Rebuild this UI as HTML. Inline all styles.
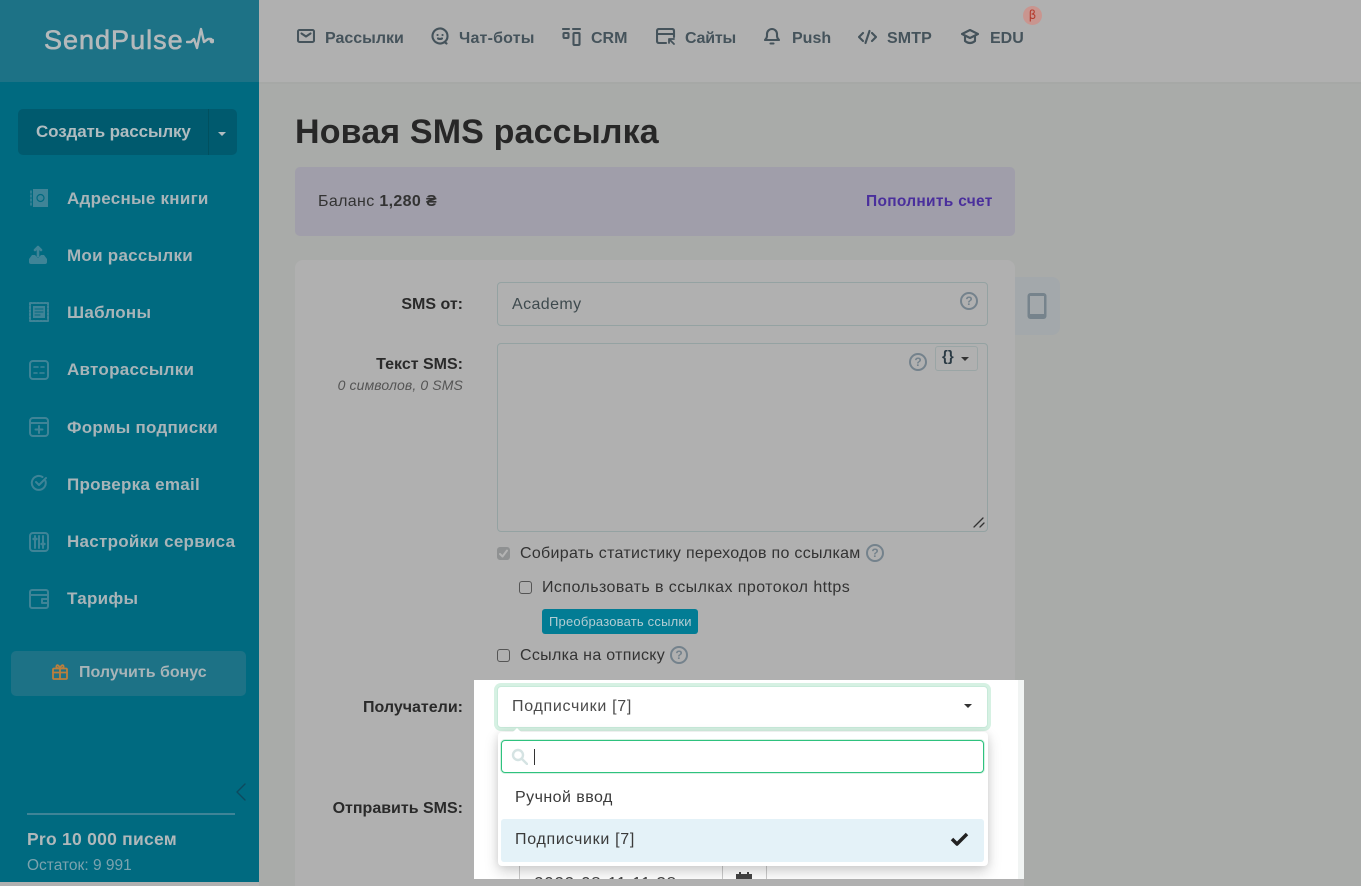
<!DOCTYPE html>
<html lang="ru"><head><meta charset="utf-8"><title>Новая SMS рассылка</title>
<style>
html,body{margin:0;padding:0;width:1361px;height:886px;overflow:hidden;background:#a9aba9}
body{position:relative;font-family:"Liberation Sans","DejaVu Sans",sans-serif;color:#2c2c2c}
.a{position:absolute;white-space:nowrap}
.b{font-weight:700}
.nav{font-size:16px;font-weight:700;color:#45535b;line-height:20px;top:29px}
.side{font-size:17px;font-weight:700;color:#a8b4b8;line-height:22px;left:67px;letter-spacing:.27px}
.ic{position:absolute;fill:none;stroke-linecap:round;stroke-linejoin:round}
.si{stroke:#3f8497;stroke-width:2}
.ni{stroke:#45535b;stroke-width:2.1}
.q{position:absolute;width:14px;height:14px;border:2px solid #74828c;border-radius:50%;color:#74828c;font-size:12px;font-weight:700;line-height:14px;text-align:center}
.t{font-size:16px;color:#333;line-height:20px;letter-spacing:.35px}
.cb{position:absolute;width:11px;height:11px;border:1.5px solid #555;border-radius:3px}
</style></head><body>

<div class="a" style="left:0;top:0;width:1361px;height:82px;background:#b0b0b0"></div>
<div class="a" style="left:0;top:82px;width:1361px;height:2px;background:#a6a8a6"></div>

<div class="a" style="left:0;top:0;width:259px;height:82px;background:#1d7286"></div>
<div class="a" style="left:0;top:82px;width:259px;height:800px;background:#006a80"></div>
<div class="a" style="left:0;top:882px;width:259px;height:4px;background:#b0b0b0"></div>

<div class="a" style="left:44px;top:24px;font-size:27px;letter-spacing:1px;-webkit-text-stroke:.6px #b4b9bb;color:#b4b9bb;line-height:32px">SendPulse</div>
<svg class="ic" style="left:186px;top:26px;stroke:#b4b9bb;stroke-width:2.4" width="28" height="26" viewBox="0 0 28 26"><path d="M1 16h4l3-3 3 9 4-19 3 13 4-3h3"/><circle cx="26" cy="15" r="1.2" fill="#b4b9bb"/></svg>

<div class="a" style="left:18px;top:109px;width:219px;height:46px;background:#005a6e;border-radius:5px"></div>
<div class="a" style="left:208px;top:109px;width:1px;height:46px;background:#00505f"></div>
<div class="a b" style="left:36px;top:121px;font-size:17px;letter-spacing:-.12px;color:#b0bcc0;line-height:22px">Создать рассылку</div>
<div class="a" style="left:218px;top:132px;border:4.5px solid transparent;border-top-color:#b0bcc0;border-bottom:0"></div>

<svg class="ic si" style="left:29px;top:188px" width="20" height="20" viewBox="0 0 20 20"><rect x="4" y="1" width="15" height="18" fill="#3f8497" stroke="none"/><path d="M2 3v14" stroke-width="1.500" stroke-dasharray="2 2"/><circle cx="11.500" cy="10" r="3.500" stroke="#006a80" stroke-width="1.200"/></svg>
<div class="a side" style="top:188px">Адресные книги</div>
<svg class="ic si" style="left:28px;top:245px" width="20" height="20" viewBox="0 0 20 20"><path d="M1 14l3-4h3l3 3 3-3h3l3 4v3q0 2-2 2H3q-2 0-2-2z" fill="#3f8497" stroke="none"/><path d="M10 11V2M7 5l3-3 3 3" stroke-width="2.6"/></svg>
<div class="a side" style="top:245px">Мои рассылки</div>
<svg class="ic si" style="left:29px;top:302px" width="20" height="20" viewBox="0 0 20 20"><rect x="1" y="1" width="18" height="18" stroke-dasharray="2 1.5"/><rect x="4" y="4" width="12" height="12" fill="#3f8497" stroke="none"/><path d="M6 7h8M6 10h8M6 13h5" stroke="#006a80" stroke-width="1"/></svg>
<div class="a side" style="top:302px">Шаблоны</div>
<svg class="ic si" style="left:29px;top:360px" width="20" height="20" viewBox="0 0 20 20"><rect x="1" y="1" width="18" height="18" rx="3"/><path d="M5 7h4M12 7h3M5 13h3M11 13h4" stroke-width="1.6"/></svg>
<div class="a side" style="top:359px">Авторассылки</div>
<svg class="ic si" style="left:29px;top:417px" width="20" height="20" viewBox="0 0 20 20"><rect x="1" y="1" width="18" height="18" rx="3"/><path d="M1 6h18M10 9v7M6.5 12.500h7" /></svg>
<div class="a side" style="top:417px">Формы подписки</div>
<svg class="ic si" style="left:30px;top:474px" width="18" height="18" viewBox="0 0 18 18"><path d="M15.500 7a7 7 0 1 1-3-4"/><path d="M6 8l3 3 7-7"/></svg>
<div class="a side" style="top:474px">Проверка email</div>
<svg class="ic si" style="left:29px;top:532px" width="20" height="20" viewBox="0 0 20 20"><rect x="1" y="1" width="18" height="18" rx="3"/><path d="M6 4v12M10 4v12M14 4v12"/><path d="M4.500 7h3M12.500 12h3" stroke-width="2.400"/></svg>
<div class="a side" style="top:531px">Настройки сервиса</div>
<svg class="ic si" style="left:29px;top:589px" width="20" height="20" viewBox="0 0 20 20"><rect x="1" y="1" width="18" height="18" rx="2"/><path d="M1 6h18M19 10h-6v4h6"/></svg>
<div class="a side" style="top:588px">Тарифы</div>

<div class="a" style="left:11px;top:651px;width:235px;height:45px;background:#1d7286;border-radius:5px"></div>
<svg class="ic" style="left:52px;top:664px;stroke:#bb7f3c;stroke-width:1.800" width="16" height="16" viewBox="0 0 16 16"><rect x="1" y="4.500" width="14" height="10.500" rx="1"/><path d="M1 8.500h14M8 4.500V15M8 4.500C5 4.500 4 3.500 4.500 2S7 1 8 4.500C9 1 11 .5 11.500 2S11 4.500 8 4.500"/></svg>
<div class="a b" style="left:79px;top:663px;font-size:16px;color:#a8b4b8;line-height:20px">Получить бонус</div>

<svg class="ic" style="left:235px;top:783px;stroke:#0d4a5e;stroke-width:1.400" width="12" height="18" viewBox="0 0 12 18"><path d="M10 1L2 9l8 8"/></svg>
<div class="a" style="left:27px;top:813px;width:208px;height:2px;background:#3f8497"></div>
<div class="a b" style="left:27px;top:829px;font-size:17.500px;letter-spacing:.25px;color:#b0b8ba;line-height:20px">Pro 10 000 писем</div>
<div class="a" style="left:27px;top:857px;font-size:15.500px;color:#7ba3ae;line-height:18px">Остаток: 9 991</div>

<svg class="ic ni" style="left:297px;top:28px" width="18" height="16" viewBox="0 0 18 16"><rect x="1" y="2" width="16" height="12" rx="1.500"/><path d="M4.500 5.500L9 8.500l4.500-3"/></svg>
<div class="a nav" style="left:325px">Рассылки</div>
<svg class="ic ni" style="left:431px;top:27px" width="18" height="18" viewBox="0 0 18 18"><path d="M13.500 15A7.500 7.500 0 1 1 16.500 9a7 7 0 0 1-3 6l2 1.500"/><path d="M6.500 8h.1M11.500 8h.1M7 11.500q2 1 4 0"/></svg>
<div class="a nav" style="left:459px;letter-spacing:.2px">Чат-боты</div>
<svg class="ic ni" style="left:562px;top:27px" width="20" height="20" viewBox="0 0 20 20"><path d="M1 2h6M11 2h7"/><rect x="1.500" y="6" width="5" height="5" rx="1"/><rect x="11.500" y="6" width="6" height="12" rx="1"/></svg>
<div class="a nav" style="left:591px">CRM</div>
<svg class="ic ni" style="left:656px;top:28px" width="20" height="18" viewBox="0 0 20 18"><path d="M10 15H3q-2 0-2-2V3q0-2 2-2h13q2 0 2 2v6M1 6h17"/><path d="M13 11h5M13 11v4M13 11l5 5" stroke-width="1.800"/></svg>
<div class="a nav" style="left:685px;letter-spacing:-.2px">Сайты</div>
<svg class="ic ni" style="left:764px;top:27px" width="16" height="18" viewBox="0 0 16 18"><path d="M1 13h14q-2-2-2-4V7a5 5 0 0 0-10 0v2q0 2-2 4zM6.500 16.500h3"/></svg>
<div class="a nav" style="left:792px">Push</div>
<svg class="ic ni" style="left:858px;top:29px" width="19" height="16" viewBox="0 0 19 16"><path d="M5 4L1 8l4 4M14 4l4 4-4 4M11.500 2l-4 12"/></svg>
<div class="a nav" style="left:887px;letter-spacing:.1px">SMTP</div>
<svg class="ic ni" style="left:961px;top:29px" width="18" height="16" viewBox="0 0 18 16"><path d="M9 1L1 5l8 4 8-4zM4 7v5q5 4 10 0V7"/></svg>
<div class="a nav" style="left:990px">EDU</div>
<div class="a" style="left:1023px;top:6px;width:19px;height:19px;border-radius:50%;background:#c9958f;color:#b5392c;font-size:12px;line-height:19px;text-align:center;font-family:'DejaVu Sans',sans-serif">β</div>

<div class="a b" style="left:295px;top:110px;font-size:34px;color:#272727;line-height:44px;letter-spacing:.15px">Новая SMS рассылка</div>
<div class="a" style="left:295px;top:167px;width:720px;height:69px;background:#a09eaa;border-radius:5px"></div>
<div class="a t" style="left:318px;top:192px;color:#333">Баланс <b>1,280 ₴</b></div>
<div class="a b" style="left:866px;top:192px;font-size:15.500px;letter-spacing:.3px;line-height:20px;color:#4a2f9c">Пополнить счет</div>

<div class="a" style="left:1015px;top:277px;width:45px;height:58px;background:#a3a8ab;border-radius:0 8px 8px 0"></div>
<svg class="ic" style="left:1026px;top:292px" width="22" height="28" viewBox="0 0 22 28"><rect x="1.500" y="1" width="19" height="26" rx="3" fill="#76838c"/><rect x="4" y="4" width="14" height="18" fill="#a3a8ab"/></svg>

<div class="a" style="left:295px;top:260px;width:720px;height:626px;background:#b0b0b0;border-radius:8px 8px 0 0"></div>

<div class="a b" style="right:898px;top:295px;font-size:16px;line-height:20px;color:#2a2a2a">SMS от:</div>
<div class="a" style="left:497px;top:282px;width:489px;height:42px;border:1px solid #94a2a2;border-radius:4px"></div>
<div class="a t" style="left:512px;top:295px;color:#3e4a4e;letter-spacing:.4px">Academy</div>
<div class="q" style="left:960px;top:292px">?</div>

<div class="a b" style="right:898px;top:355px;font-size:16px;line-height:20px;color:#2a2a2a">Текст SMS:</div>
<div class="a" style="right:898px;top:376px;font-size:14px;letter-spacing:.12px;font-style:italic;line-height:18px;color:#555">0 символов, 0 SMS</div>
<div class="a" style="left:497px;top:343px;width:489px;height:187px;border:1px solid #94a2a2;border-radius:4px"></div>
<div class="q" style="left:909px;top:353px">?</div>
<div class="a" style="left:935px;top:346px;width:41px;height:23px;border:1px solid #9aa5a5;border-radius:3px"></div>
<div class="a b" style="left:942px;top:349px;font-size:15px;line-height:16px;color:#2a3a44">{}</div>
<div class="a" style="left:961px;top:357px;border:4px solid transparent;border-top-color:#333;border-bottom:0"></div>
<svg class="ic" style="left:972px;top:517px;stroke:#333;stroke-width:1.300" width="14" height="12" viewBox="0 0 14 12"><path d="M2 10l9-9M8 10l4-4"/></svg>

<div class="a" style="left:497px;top:547px;width:13px;height:13px;background:#8f9192;border-radius:3px"></div>
<svg class="ic" style="left:499px;top:549px;stroke:#b4b4b4;stroke-width:2" width="9" height="9" viewBox="0 0 9 9"><path d="M1 5l2.500 2.500L8 1.500"/></svg>
<div class="a t" style="left:520px;top:544px;letter-spacing:.3px">Собирать статистику переходов по ссылкам</div>
<div class="q" style="left:866px;top:544px">?</div>
<div class="cb" style="left:519px;top:581px"></div>
<div class="a t" style="left:542px;top:578px;letter-spacing:.43px">Использовать в ссылках протокол https</div>
<div class="a" style="left:542px;top:609px;width:156px;height:25px;background:#027c94;border-radius:3px"></div>
<div class="a" style="left:549px;top:613px;font-size:13px;letter-spacing:.2px;line-height:17px;color:#b3cdd3">Преобразовать ссылки</div>
<div class="cb" style="left:497px;top:649px"></div>
<div class="a t" style="left:520px;top:646px;letter-spacing:.3px">Ссылка на отписку</div>
<div class="q" style="left:670px;top:646px">?</div>

<div class="a b" style="right:898px;top:698px;font-size:16px;line-height:20px;color:#2a2a2a">Получатели:</div>
<div class="a b" style="right:898px;top:799px;font-size:16px;line-height:20px;color:#2a2a2a">Отправить SMS:</div>

<div class="a" style="left:474px;top:680px;width:550px;height:199px;background:#fff;overflow:hidden">
  <div class="a" style="left:544px;top:0;width:6px;height:199px;background:#f1f4f3"></div>
  <div class="a" style="left:23px;top:6px;width:489px;height:40px;border:1px solid #c8eada;box-shadow:0 0 0 3px #d6f1e3;border-radius:4px;background:#fff"></div>
  <div class="a t" style="left:38px;top:17px;color:#4a4a4a;letter-spacing:.7px">Подписчики [7]</div>
  <div class="a" style="left:490px;top:24px;border:4.500px solid transparent;border-top-color:#333;border-bottom:0"></div>

  <div class="a" style="left:45px;top:175px;width:248px;height:40px;border:1px solid #ccc;box-sizing:border-box"></div>
  <div class="a" style="left:248px;top:175px;width:1px;height:30px;background:#ccc"></div>
  <div class="a" style="left:60px;top:193px;font-size:17.300px;line-height:20px;color:#444;letter-spacing:.55px">2022-08-11 11:38</div>
  <svg class="ic" style="left:261px;top:192px" width="18" height="12" viewBox="0 0 18 12"><rect x="1" y="2" width="16" height="14" fill="#444"/><path d="M5 0v3M13 0v3" stroke="#444" stroke-width="2"/></svg>

  <div class="a" style="left:24px;top:52px;width:490px;height:134px;background:#fff;border-radius:4px;box-shadow:0 6px 14px rgba(0,0,0,.18),0 0 8px rgba(0,0,0,.08)"></div>
  <div class="a" style="left:37px;top:48px;border:6px solid transparent;border-bottom-color:#fff;border-top:0"></div>
  <div class="a" style="left:27px;top:60px;width:481px;height:31px;border:1px solid #2ec27e;box-shadow:0 0 0 1px #d6f1e3;border-radius:4px;background:#fff"></div>
  <svg class="ic" style="left:37px;top:68px;stroke:#d5e3e3;stroke-width:2.400" width="17" height="17" viewBox="0 0 17 17"><circle cx="7" cy="7" r="5"/><path d="M11 11l5 5"/></svg>
  <div class="a" style="left:60px;top:69px;width:1px;height:16px;background:#333"></div>
  <div class="a t" style="left:41px;top:108px;color:#3a3a3a;letter-spacing:.45px">Ручной ввод</div>
  <div class="a" style="left:27px;top:139px;width:483px;height:43px;background:#e4f2f8;border-radius:3px"></div>
  <div class="a t" style="left:41px;top:150px;color:#3a3a3a;letter-spacing:.7px">Подписчики [7]</div>
  <svg class="ic" style="left:476px;top:151px;stroke:#222;stroke-width:3.500;stroke-linecap:butt" width="19" height="16" viewBox="0 0 19 16"><path d="M2 8l5 5L17 3"/></svg>
</div>
<div class="a" style="left:474px;top:879px;width:550px;height:7px;background:#b0b0b0"></div>
</body></html>
